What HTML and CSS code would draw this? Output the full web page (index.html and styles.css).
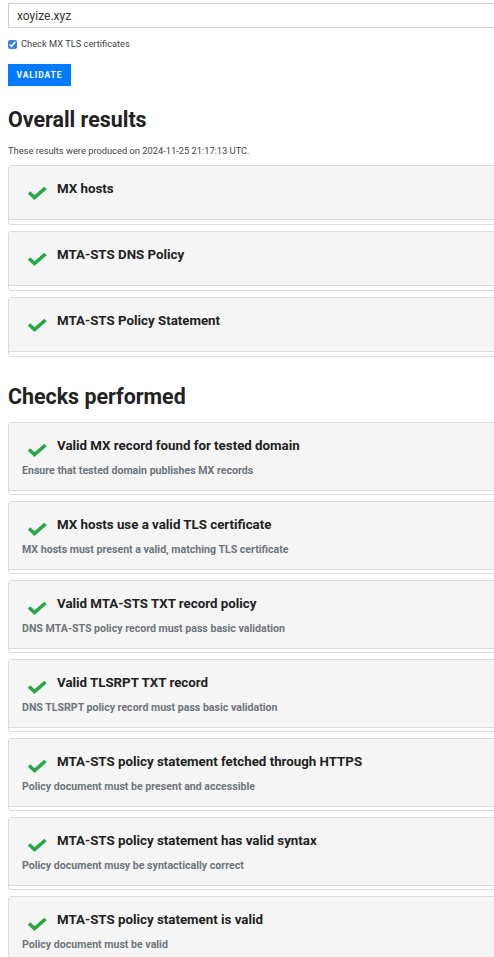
FILE: index.html
```html
<!DOCTYPE html>
<html>
<head>
<meta charset="utf-8">
<link rel="stylesheet" href="styles.css">
</head>
<body>
<div class="page">
  <form class="form">
    <input class="domain" type="text" value="xoyize.xyz">
    <label class="check-row"><input type="checkbox" checked> Check MX TLS certificates</label>
    <button type="button" class="btn">VALIDATE</button>
  </form>

  <h2 class="section-title first">Overall results</h2>
  <p class="produced">These results were produced on 2024-11-25 21:17:13 UTC.</p>

  <div class="card">
    <div class="card-header">
      <div class="title-row"><svg class="ok" viewBox="0 0 20 14"><polyline points="2,6.5 7.5,11.5 18.5,2" /></svg><h5>MX hosts</h5></div>
    </div>
    <div class="card-body"></div>
  </div>
  <div class="card">
    <div class="card-header">
      <div class="title-row"><svg class="ok" viewBox="0 0 20 14"><polyline points="2,6.5 7.5,11.5 18.5,2" /></svg><h5>MTA-STS DNS Policy</h5></div>
    </div>
    <div class="card-body"></div>
  </div>
  <div class="card">
    <div class="card-header">
      <div class="title-row"><svg class="ok" viewBox="0 0 20 14"><polyline points="2,6.5 7.5,11.5 18.5,2" /></svg><h5>MTA-STS Policy Statement</h5></div>
    </div>
    <div class="card-body"></div>
  </div>

  <h2 class="section-title second">Checks performed</h2>

  <div class="card check">
    <div class="card-header">
      <div class="title-row"><svg class="ok" viewBox="0 0 20 14"><polyline points="2,6.5 7.5,11.5 18.5,2" /></svg><h5>Valid MX record found for tested domain</h5></div>
      <div class="desc">Ensure that tested domain publishes MX records</div>
    </div>
    <div class="card-body"></div>
  </div>
  <div class="card check">
    <div class="card-header">
      <div class="title-row"><svg class="ok" viewBox="0 0 20 14"><polyline points="2,6.5 7.5,11.5 18.5,2" /></svg><h5>MX hosts use a valid TLS certificate</h5></div>
      <div class="desc">MX hosts must present a valid, matching TLS certificate</div>
    </div>
    <div class="card-body"></div>
  </div>
  <div class="card check">
    <div class="card-header">
      <div class="title-row"><svg class="ok" viewBox="0 0 20 14"><polyline points="2,6.5 7.5,11.5 18.5,2" /></svg><h5>Valid MTA-STS TXT record policy</h5></div>
      <div class="desc">DNS MTA-STS policy record must pass basic validation</div>
    </div>
    <div class="card-body"></div>
  </div>
  <div class="card check">
    <div class="card-header">
      <div class="title-row"><svg class="ok" viewBox="0 0 20 14"><polyline points="2,6.5 7.5,11.5 18.5,2" /></svg><h5>Valid TLSRPT TXT record</h5></div>
      <div class="desc">DNS TLSRPT policy record must pass basic validation</div>
    </div>
    <div class="card-body"></div>
  </div>
  <div class="card check">
    <div class="card-header">
      <div class="title-row"><svg class="ok" viewBox="0 0 20 14"><polyline points="2,6.5 7.5,11.5 18.5,2" /></svg><h5>MTA-STS policy statement fetched through HTTPS</h5></div>
      <div class="desc">Policy document must be present and accessible</div>
    </div>
    <div class="card-body"></div>
  </div>
  <div class="card check">
    <div class="card-header">
      <div class="title-row"><svg class="ok" viewBox="0 0 20 14"><polyline points="2,6.5 7.5,11.5 18.5,2" /></svg><h5>MTA-STS policy statement has valid syntax</h5></div>
      <div class="desc">Policy document musy be syntactically correct</div>
    </div>
    <div class="card-body"></div>
  </div>
  <div class="card check">
    <div class="card-header">
      <div class="title-row"><svg class="ok" viewBox="0 0 20 14"><polyline points="2,6.5 7.5,11.5 18.5,2" /></svg><h5>MTA-STS policy statement is valid</h5></div>
      <div class="desc">Policy document must be valid</div>
    </div>
    <div class="card-body"></div>
  </div>
</div>
</body>
</html>
```

FILE: styles.css
```css
html, body {
  margin: 0;
  padding: 0;
  overflow: hidden;
  background: #fff;
}
body {
  font-family: Roboto, "Liberation Sans", sans-serif;
  color: #212529;
}
.page {
  width: 640px;
  padding: 3px 0 0 8px;
}
.form {
  display: flex;
  flex-direction: column;
  align-items: flex-start;
}
.domain {
  box-sizing: border-box;
  width: 100%;
  height: 25px;
  margin: 0;
  padding: 0 8px;
  border: 1px solid #cfcfcf;
  border-radius: 0;
  font-family: Roboto, sans-serif;
  font-size: 12px;
  color: #333;
  outline: none;
}
.check-row {
  display: flex;
  align-items: center;
  gap: 4px;
  margin-top: 10px;
  font-size: 9.3px;
  color: #444;
  line-height: 12px;
}
.check-row input {
  width: 9px;
  height: 9px;
  margin: 0;
  accent-color: #3b83e0;
}
.btn {
  margin-top: 14px;
  width: 63px;
  height: 22px;
  padding: 0;
  border: none;
  background: #007bff;
  color: #fff;
  font-family: Roboto, sans-serif;
  font-weight: 700;
  font-size: 8.5px;
  letter-spacing: 0.9px;
}
.section-title {
  margin: 0;
  font-size: 21.4px;
  font-weight: 700;
  line-height: 25px;
  color: #222;
}
.section-title.first { margin-top: 21px; }
.section-title.second { margin-top: 27px; margin-bottom: 13px; }
.produced {
  margin: 11px 0 7px;
  font-size: 9.3px;
  line-height: 15px;
  color: #444;
}
.card {
  border: 1px solid #dcdcdc;
  border-radius: 3px;
  margin-bottom: 6px;
  background: #fff;
}
.card-header {
  background: #f5f5f5;
  border-bottom: 1px solid #dcdcdc;
  padding: 13px 13px 11px;
}
.card-body {
  height: 4px;
}
.check .card-body {
  height: 3px;
}
.title-row {
  display: flex;
  align-items: flex-start;
  margin-bottom: 8px;
}
.check .title-row {
  margin-bottom: 6px;
}
.ok {
  width: 20px;
  height: 14px;
  margin: 7px 10px 0 5px;
  flex: none;
}
.ok polyline {
  fill: none;
  stroke: #28a745;
  stroke-width: 3.6;
  stroke-linecap: butt;
  stroke-linejoin: miter;
}
h5 {
  margin: 0;
  font-size: 13.3px;
  font-weight: 700;
  line-height: 20px;
  color: #222;
}
.desc {
  font-size: 10.6px;
  font-weight: 700;
  line-height: 16px;
  color: #6c757d;
}
```
